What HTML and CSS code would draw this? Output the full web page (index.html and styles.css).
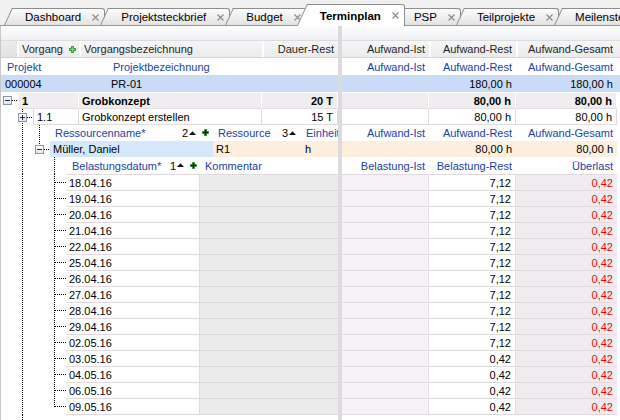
FILE: index.html
```html
<!DOCTYPE html>
<html lang="de">
<head>
    <meta charset="UTF-8">
    <title>Terminplan</title>
    <link rel="stylesheet" href="styles.css">
</head>
<body>
    <div class="tabs">
        <div class="tab">Dashboard<svg class="close" width="7" height="7" viewBox="0 0 7 7"><path d="M.5 .5l6 6M6.5 .5l-6 6"/></svg></div>
        <div class="tab">Projektsteckbrief<svg class="close" width="7" height="7" viewBox="0 0 7 7"><path d="M.5 .5l6 6M6.5 .5l-6 6"/></svg></div>
        <div class="tab">Budget<svg class="close" width="7" height="7" viewBox="0 0 7 7"><path d="M.5 .5l6 6M6.5 .5l-6 6"/></svg></div>
        <div class="tab active">Terminplan<svg class="close" width="7" height="7" viewBox="0 0 7 7"><path d="M.5 .5l6 6M6.5 .5l-6 6"/></svg></div>
        <div class="tab">PSP<svg class="close" width="7" height="7" viewBox="0 0 7 7"><path d="M.5 .5l6 6M6.5 .5l-6 6"/></svg></div>
        <div class="tab">Teilprojekte<svg class="close" width="7" height="7" viewBox="0 0 7 7"><path d="M.5 .5l6 6M6.5 .5l-6 6"/></svg></div>
        <div class="tab">Meilensteine<svg class="close" width="7" height="7" viewBox="0 0 7 7"><path d="M.5 .5l6 6M6.5 .5l-6 6"/></svg></div>
    </div>

    <div class="panes">
        <!-- Vorgänge -->
        <div class="pane links">
            <div class="band"></div>
            <div class="row r17 head">
                <span class="c leer col-baum"></span>
                <span class="c col-vorgang">Vorgang<svg class="plus" width="7" height="7" viewBox="0 0 7 7"><path d="M2.5 .5h2v2h2v2h-2v2h-2v-2h-2v-2h2z"/></svg></span>
                <span class="c col-bez">Vorgangsbezeichnung</span>
                <span class="c num col-dauer">Dauer-Rest</span>
            </div>
            <div class="row r17 lbl kopf">
                <span class="c col-pnr">Projekt</span>
                <span class="c">Projektbezeichnung</span>
            </div>
            <div class="row r17 proj">
                <span class="c col-pnr">000004</span>
                <span class="c">PR-01</span>
            </div>
            <div class="row r17 sum">
                <span class="sp2"></span><span class="exp"></span><span class="tick sp6"></span><span class="sp1"></span>
                <span class="c col-nr">1</span>
                <span class="c col-bez">Grobkonzept</span>
                <span class="c num col-dauer">20 T</span>
            </div>
            <div class="row task">
                <span class="sp17"></span><span class="vl"><span class="exp plus"></span></span><span class="tick sp6"></span>
                <span class="c col-nr2">1.1</span>
                <span class="c col-bez">Grobkonzept erstellen</span>
                <span class="c num col-dauer">15 T</span>
            </div>
            <div class="row lbl">
                <span class="sp17"></span><span class="vl"></span><span class="sp8"></span><span class="vl"></span><span class="sp6"></span>
                <span class="c split col-name">Ressourcenname*<span class="sort">2<svg width="7" height="4" viewBox="0 0 7 4"><path d="M0 4L3.5 .3 7 4z"/></svg><svg class="plus" width="7" height="7" viewBox="0 0 7 7"><path d="M2.5 .5h2v2h2v2h-2v2h-2v-2h-2v-2h2z"/></svg></span></span>
                <span class="c split col-res">Ressource<span class="sort">3<svg width="7" height="4" viewBox="0 0 7 4"><path d="M0 4L3.5 .3 7 4z"/></svg></span></span>
                <span class="c col-einh">Einheit</span>
            </div>
            <div class="row res">
                <span class="sp17"></span><span class="vl"></span><span class="sp8"></span><span class="vl half"><span class="exp"></span></span><span class="tick sp6"></span>
                <span class="c name col-name">Müller, Daniel</span>
                <span class="c zuord col-res">R1</span>
                <span class="c zuord col-einh">h</span>
            </div>
            <div class="row r17 lbl">
                <span class="sp17"></span><span class="vl"></span><span class="sp23"></span><span class="vl"></span><span class="sp7"></span>
                <span class="c split col-datum">Belastungsdatum*<span class="sort">1<svg width="7" height="4" viewBox="0 0 7 4"><path d="M0 4L3.5 .3 7 4z"/></svg><svg class="plus" width="7" height="7" viewBox="0 0 7 7"><path d="M2.5 .5h2v2h2v2h-2v2h-2v-2h-2v-2h2z"/></svg></span></span>
                <span class="c col-komm">Kommentar</span>
            </div>
            <div id="daten-links"></div>
            <div class="rest">
                <span class="sp17"></span><span class="vl"></span>
            </div>
        </div>

        <div class="splitter"></div>

        <!-- Aufwände -->
        <div class="pane rechts">
            <div class="band"></div>
            <div class="row r17 head">
                <span class="c num col-a">Aufwand-Ist</span>
                <span class="c num col-b">Aufwand-Rest</span>
                <span class="c num col-g">Aufwand-Gesamt</span>
            </div>
            <div class="row r17 lbl">
                <span class="c num col-a">Aufwand-Ist</span>
                <span class="c num col-b">Aufwand-Rest</span>
                <span class="c num col-g">Aufwand-Gesamt</span>
            </div>
            <div class="row r17 proj">
                <span class="c col-a"></span>
                <span class="c num col-b">180,00 h</span>
                <span class="c num col-g">180,00 h</span>
            </div>
            <div class="row r17 sum">
                <span class="c col-a"></span>
                <span class="c num col-b">80,00 h</span>
                <span class="c num col-g">80,00 h</span>
            </div>
            <div class="row task">
                <span class="c col-a"></span>
                <span class="c num col-b">80,00 h</span>
                <span class="c num col-g">80,00 h</span>
            </div>
            <div class="row lbl">
                <span class="c num col-a">Aufwand-Ist</span>
                <span class="c num col-b">Aufwand-Rest</span>
                <span class="c num col-g">Aufwand-Gesamt</span>
            </div>
            <div class="row res">
                <span class="c zuord col-a"></span>
                <span class="c zuord num col-b">80,00 h</span>
                <span class="c zuord num col-g">80,00 h</span>
            </div>
            <div class="row r17 lbl">
                <span class="c num col-a">Belastung-Ist</span>
                <span class="c num col-b">Belastung-Rest</span>
                <span class="c num col-g">Überlast</span>
            </div>
            <div id="daten-rechts"></div>
        </div>
    </div>

    <script>
        const belastung = [
            ['18.04.16', '7,12'], ['19.04.16', '7,12'], ['20.04.16', '7,12'],
            ['21.04.16', '7,12'], ['22.04.16', '7,12'], ['25.04.16', '7,12'],
            ['26.04.16', '7,12'], ['27.04.16', '7,12'], ['28.04.16', '7,12'],
            ['29.04.16', '7,12'], ['02.05.16', '7,12'], ['03.05.16', '0,42'],
            ['04.05.16', '0,42'], ['06.05.16', '0,42'], ['09.05.16', '0,42']
        ];
        const letzte = belastung.length - 1;

        document.getElementById('daten-links').innerHTML = belastung.map((b, i) => `
            <div class="row datum${i === letzte ? ' last' : ''}">
                <span class="sp17"></span><span class="vl"></span><span class="sp23"></span><span class="vl tk${i === letzte ? ' half' : ''}"></span><span class="tick sp7"></span>
                <span class="c col-datum">${b[0]}</span>
                <span class="c col-komm"></span>
            </div>
        `).join('');

        document.getElementById('daten-rechts').innerHTML = belastung.map((b, i) => `
            <div class="row datum${i === letzte ? ' last' : ''}">
                <span class="c ist col-a"></span>
                <span class="c num col-b">${b[1]}</span>
                <span class="c num ueber col-g">0,42</span>
            </div>
        `).join('');
    </script>
</body>
</html>
```

FILE: styles.css
```css
* {
    box-sizing: border-box;
}
body {
    margin: 0;
    width: 620px;
    height: 420px;
    overflow: hidden;
    background: #fff;
    font-family: "Liberation Sans", Arial, sans-serif;
    font-size: 11px;
    color: #000;
}
svg {
    display: block;
    flex: none;
}

/* Reiter */
.tabs {
    display: flex;
    align-items: flex-end;
    height: 26px;
    padding-left: 13px;
    background: #f0f0f0;
    border-bottom: 1px solid #979797;
}
.tab {
    position: relative;
    flex: none;
    display: flex;
    align-items: center;
    height: 17px;
    margin-right: 4px;
    padding: 0 5px 0 12px;
    font-size: 11.5px;
    white-space: nowrap;
    background: linear-gradient(#fcfcfc, #e3e3e3);
    border-top: 1px solid #8e8e8e;
    border-right: 1px solid #8e8e8e;
    border-top-right-radius: 3px;
}
.tab::before {
    content: "";
    position: absolute;
    top: -1px;
    bottom: 0;
    left: -1px;
    width: 12px;
    background: inherit;
    border-top: 1px solid #8e8e8e;
    border-left: 1px solid #8e8e8e;
    transform-origin: 0 0;
    transform: skewX(-25deg);
}
.tab.active {
    z-index: 1;
    height: 22px;
    margin-left: -3px;
    margin-right: -3px;
    margin-bottom: -1px;
    font-weight: bold;
    background: #fff;
}
.close {
    margin-left: 11px;
    stroke: #8a8a8a;
    stroke-width: 1.1;
}

/* Bereiche */
.panes {
    display: flex;
    height: 394px;
}
.pane {
    display: flex;
    flex-direction: column;
    overflow: hidden;
}
.links {
    flex: none;
    width: 338px;
    border-left: 1px solid #c8c8c8;
}
.splitter {
    flex: none;
    width: 4px;
    background: #dddadd;
}
.rechts {
    flex: 1;
}
.band {
    flex: none;
    height: 15px;
    background: linear-gradient(#fdfdfe, #eef1f4);
    border-bottom: 1px solid #dcdcdc;
}

/* Zeilen und Zellen */
.row {
    display: flex;
    flex: none;
    height: 16px;
}
.r17 {
    height: 17px;
}
.c {
    display: flex;
    align-items: center;
    flex: none;
    padding: 0 3px;
    overflow: hidden;
    white-space: nowrap;
}
.num {
    justify-content: flex-end;
    padding-right: 4px;
}
.split {
    justify-content: space-between;
}
.sort {
    display: flex;
    align-items: center;
    gap: 1px;
    color: #000;
}
.sort svg {
    fill: #111;
    margin-top: -1px;
}
.plus {
    fill: #7fd27f;
    stroke: #2f962f;
}
.sort .plus {
    margin-left: 5px;
}
.head .plus {
    margin-left: 6px;
}

.col-baum { width: 16px; }
.col-vorgang { width: 62px; }
.col-bez { width: 183px; }
.col-dauer { width: 76px; }
.col-pnr { width: 106px; }
.col-nr { width: 60px; }
.col-nr2 { width: 46px; }
.col-name { width: 163px; padding-right: 4px; }
.col-res { width: 89px; padding-right: 6px; }
.col-einh { width: 36px; }
.col-datum { width: 134px; }
.col-komm { width: 138px; }
.col-a { width: 87px; }
.col-b { width: 87px; }
.col-g { width: 101px; }

/* Kopfzeile */
.head {
    background: linear-gradient(#f6f6f6, #ebebeb);
    border-bottom: 1px solid #d4d4d4;
    color: #1e1e1e;
}
.head .c + .c {
    border-left: 2px solid #fff;
}
.head .c {
    padding-left: 3px;
}
.head .leer {
    background: linear-gradient(#ececec, #e1e1e1);
}

/* blaue Beschriftungen */
.lbl {
    color: #1b3fa6;
}
.lbl .c {
    padding-left: 5px;
}
.lbl .col-einh {
    padding-left: 4px;
    padding-right: 0;
}
.lbl .col-datum {
    padding-left: 6px;
    padding-right: 3px;
}
.kopf .c {
    padding-left: 6px;
}

.proj {
    background: #c8dcf8;
}
.proj .c {
    padding-left: 4px;
}

.sum {
    font-weight: bold;
}
.sum .c {
    background: #efedef;
    border-top: 1px solid #fff;
    border-bottom: 1px solid #e2dee2;
    border-right: 1px solid #fff;
}
.task .c {
    border-bottom: 1px solid #dedade;
    border-right: 1px solid #dedade;
}
.task .col-nr2 {
    border-left: 1px solid #dedade;
    padding-left: 3px;
}

.res .name {
    background: #d5e7fb;
}
.zuord {
    background: #fdefdc;
}
.res .col-einh {
    padding-left: 3px;
}
.rechts .res .c {
    background: #fdefdc;
}

/* Belastungen */
.datum .c {
    border-top: 1px solid #dedade;
}
.datum.last {
    height: 17px;
}
.datum.last .c {
    border-bottom: 1px solid #dedade;
}
.datum .col-datum {
    background: #fff;
    border-right: 1px solid #dedade;
}
.datum .col-komm {
    background: #ecebec;
}
.datum .ist {
    background: #f6f2f6;
    border-right: 1px solid #e2dee2;
}
.datum .col-b {
    border-right: 1px solid #e2dee2;
}
.ueber {
    background: #eeecee;
    color: #f00;
}
.rest {
    display: flex;
    flex: 1;
}

/* Baumlinien */
.sp1 { flex: none; width: 1px; }
.sp2 { flex: none; width: 2px; }
.sp6 { flex: none; width: 6px; }
.sp7 { flex: none; width: 7px; }
.sp8 { flex: none; width: 8px; }
.sp17 { flex: none; width: 17px; }
.sp23 { flex: none; width: 23px; }
.vl {
    flex: none;
    display: flex;
    align-items: center;
    width: 9px;
    background: repeating-linear-gradient(#000 0 1px, transparent 1px 2px) 4px 0 / 1px 100% no-repeat;
}
.vl.half {
    background-size: 1px 9px;
}
.vl.tk {
    background:
        repeating-linear-gradient(#000 0 1px, transparent 1px 2px) 4px 0 / 1px 100% no-repeat,
        repeating-linear-gradient(90deg, #000 0 1px, transparent 1px 2px) 5px 8px / 4px 1px no-repeat;
}
.vl.tk.half {
    background-size: 1px 9px, 4px 1px;
}
.tick {
    background: repeating-linear-gradient(90deg, #000 0 1px, transparent 1px 2px) 0 8px / 100% 1px no-repeat;
}
.exp {
    position: relative;
    flex: none;
    align-self: center;
    width: 9px;
    height: 9px;
    border: 1px solid #8c98a8;
    background: linear-gradient(#fff, #e4e4e4);
}
.exp::before {
    content: "";
    position: absolute;
    left: 1px;
    right: 1px;
    top: 3px;
    height: 1px;
    background: #1c2c5c;
}
.exp.plus::after {
    content: "";
    position: absolute;
    top: 1px;
    bottom: 1px;
    left: 3px;
    width: 1px;
    background: #1c2c5c;
}
```
